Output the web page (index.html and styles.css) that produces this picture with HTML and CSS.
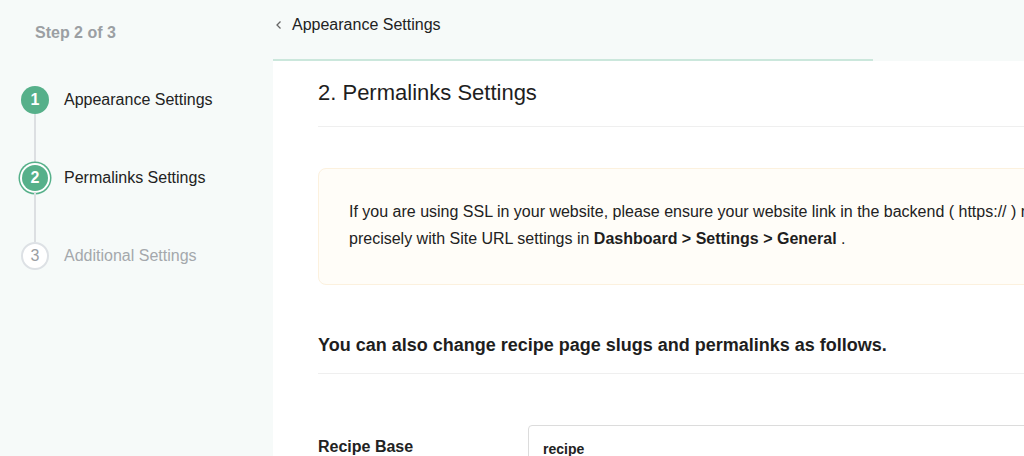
FILE: index.html
```html
<!DOCTYPE html>
<html lang="en">
<head>
<meta charset="utf-8">
<title>Permalinks Settings</title>
<link rel="stylesheet" href="styles.css">
</head>
<body>
<div class="layout">
  <aside class="sidebar">
    <div class="step-count">Step 2 of 3</div>
    <ol class="steps">
      <li class="step done"><span class="dot">1</span><span class="label">Appearance Settings</span></li>
      <li class="step current"><span class="dot">2</span><span class="label">Permalinks Settings</span></li>
      <li class="step todo"><span class="dot">3</span><span class="label">Additional Settings</span></li>
    </ol>
  </aside>
  <main class="main">
    <header class="topbar">
      <a class="back" href="#"><svg class="chev" width="8" height="10" viewBox="0 0 8 10"><path d="M5.5 1.5 L2 5 L5.5 8.5" fill="none" stroke="#666" stroke-width="1.3"/></svg><span>Appearance Settings</span></a>
    </header>
    <div class="progress"><div class="progress-fill"></div></div>
    <section class="panel">
      <h1 class="title">2. Permalinks Settings</h1>
      <div class="notice">
        <p>If you are using SSL in your website, please ensure your website link in the backend ( https:// ) matches<br>precisely with Site URL settings in <strong>Dashboard &gt; Settings &gt; General</strong> .</p>
      </div>
      <h2 class="subtitle">You can also change recipe page slugs and permalinks as follows.</h2>
      <div class="field">
        <label class="field-label" for="base">Recipe Base</label>
        <input class="field-input" id="base" type="text" value="recipe">
      </div>
    </section>
  </main>
</div>
</body>
</html>
```

FILE: styles.css
```css
* { box-sizing: border-box; }
html, body { margin: 0; padding: 0; }
body {
  width: 1024px;
  height: 456px;
  overflow: hidden;
  font-family: "Liberation Sans", Arial, sans-serif;
  color: #1e1e1e;
  background: #f6faf9;
}
.layout {
  display: grid;
  grid-template-columns: 273px 1fr;
  height: 456px;
}
.sidebar {
  background: #f6faf9;
  padding: 23px 0 0 21px;
}
.step-count {
  font-size: 16px;
  font-weight: bold;
  color: #9b9fa3;
  padding-left: 14px;
  line-height: 20px;
}
.steps {
  list-style: none;
  margin: 43px 0 0;
  padding: 0;
}
.step {
  position: relative;
  display: flex;
  align-items: center;
  gap: 15px;
  height: 28px;
  margin-bottom: 50px;
  font-size: 16px;
}
.step:not(:last-child)::after {
  content: "";
  position: absolute;
  left: 13px;
  top: 28px;
  width: 2px;
  height: 50px;
  background: #dcdfe2;
}
.dot {
  width: 28px;
  height: 28px;
  border-radius: 50%;
  display: flex;
  align-items: center;
  justify-content: center;
  font-size: 16px;
  flex: none;
}
.done .dot, .current .dot {
  background: #56b08a;
  color: #fff;
  font-weight: bold;
}
.current .dot {
  width: 26px;
  height: 26px;
  margin: 0 1px;
  box-shadow: 0 0 0 2px #fff, 0 0 0 3.5px #56b08a;
}
.todo .dot {
  background: #fff;
  border: 2px solid #dde1e5;
  color: #9a9ea2;
  font-weight: normal;
}
.todo .label { color: #a4a8ac; }
.label { color: #222; }
.main {
  display: flex;
  flex-direction: column;
  min-width: 0;
  overflow: hidden;
}
.topbar {
  flex: none;
  height: 59px;
  padding: 15px 0 0 0;
}
.back {
  display: inline-flex;
  align-items: center;
  gap: 9px;
  color: #222;
  text-decoration: none;
  font-size: 16px;
  line-height: 19px;
}
.chev { margin-left: 2px; }
.progress {
  flex: none;
  height: 2px;
  background: transparent;
}
.progress-fill {
  width: 600px;
  height: 2px;
  background: #cbe7dc;
}
.panel {
  flex: 1 0 auto;
  background: #fff;
  padding: 19px 0 0 45px;
  width: 1100px;
}
.title {
  margin: 0;
  font-size: 22px;
  font-weight: normal;
  line-height: 26px;
  padding-bottom: 20px;
  border-bottom: 1px solid #efefef;
  color: #1e1e1e;
}
.notice {
  margin-top: 41px;
  background: #fffdf8;
  border: 1px solid #fcf1de;
  border-radius: 8px;
  padding: 29px 30px 32px;
}
.notice p {
  margin: 0;
  font-size: 16px;
  line-height: 27px;
  color: #222;
}
.notice strong { color: #1e1e1e; }
.subtitle {
  margin: 49px 0 0;
  font-size: 18px;
  font-weight: bold;
  line-height: 22px;
  padding-bottom: 17px;
  border-bottom: 1px solid #efefef;
}
.field {
  display: flex;
  align-items: center;
  margin-top: 51px;
}
.field-label {
  width: 210px;
  font-size: 16px;
  font-weight: bold;
  color: #222;
  flex: none;
}
.field-input {
  width: 600px;
  height: 44px;
  border: 1px solid #dcdcdc;
  border-radius: 4px;
  padding: 3px 14px 0;
  font-family: "Liberation Sans", Arial, sans-serif;
  font-size: 14px;
  font-weight: bold;
  color: #222;
  background: #fff;
}
```
